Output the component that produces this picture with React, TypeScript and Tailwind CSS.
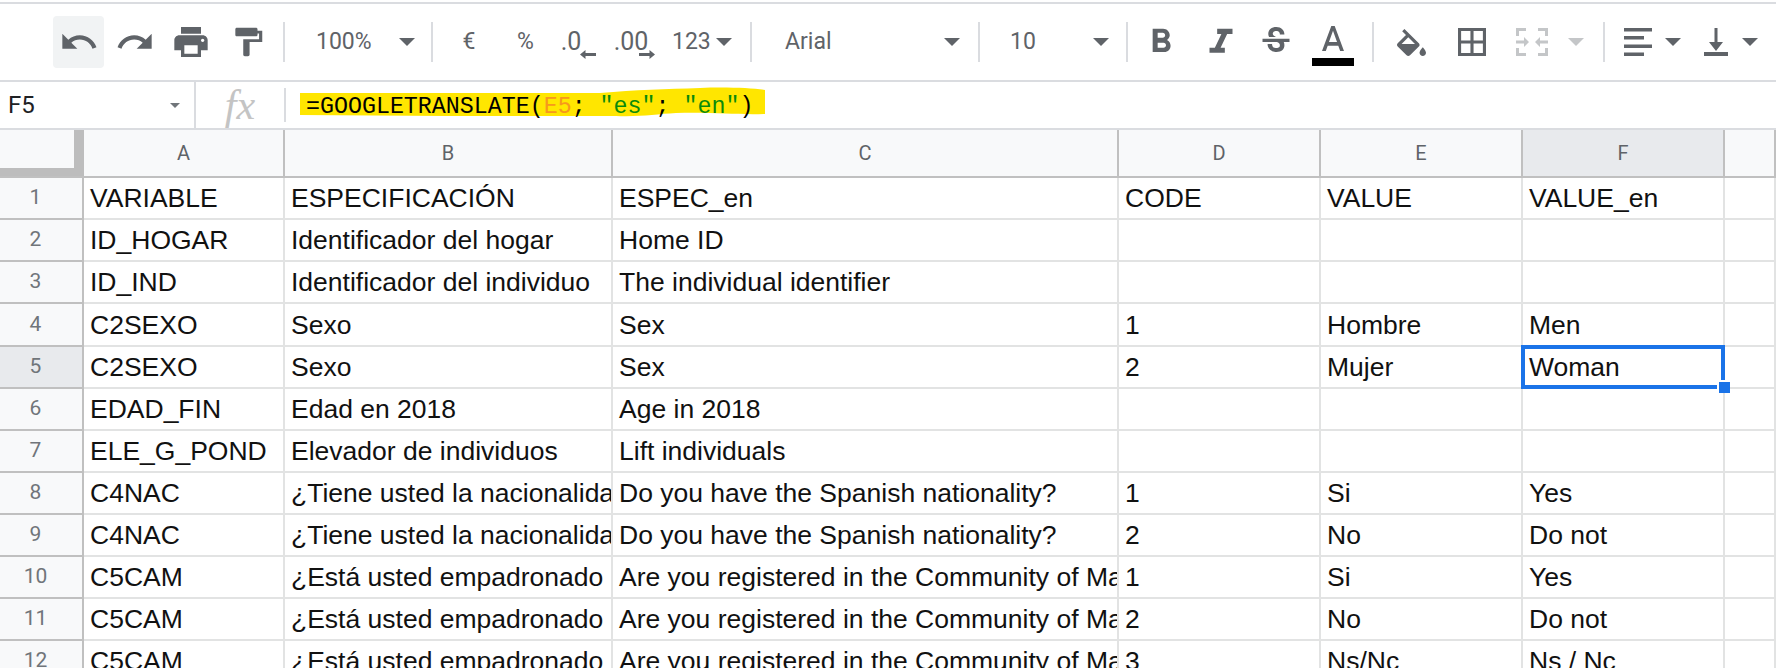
import React from "react";

const rows = [
  ["VARIABLE", "ESPECIFICACIÓN", "ESPEC_en", "CODE", "VALUE", "VALUE_en"],
  ["ID_HOGAR", "Identificador del hogar", "Home ID", "", "", ""],
  ["ID_IND", "Identificador del individuo", "The individual identifier", "", "", ""],
  ["C2SEXO", "Sexo", "Sex", "1", "Hombre", "Men"],
  ["C2SEXO", "Sexo", "Sex", "2", "Mujer", "Woman"],
  ["EDAD_FIN", "Edad en 2018", "Age in 2018", "", "", ""],
  ["ELE_G_POND", "Elevador de individuos", "Lift individuals", "", "", ""],
  ["C4NAC", "¿Tiene usted la nacionalida", "Do you have the Spanish nationality?", "1", "Si", "Yes"],
  ["C4NAC", "¿Tiene usted la nacionalida", "Do you have the Spanish nationality?", "2", "No", "Do not"],
  ["C5CAM", "¿Está usted empadronado", "Are you registered in the Community of Ma", "1", "Si", "Yes"],
  ["C5CAM", "¿Está usted empadronado", "Are you registered in the Community of Ma", "2", "No", "Do not"],
  ["C5CAM", "¿Está usted empadronado", "Are you registered in the Community of Ma", "3", "Ns/Nc", "Ns / Nc"],
];

const columns = ["A", "B", "C", "D", "E", "F", ""];
const gridCols = "grid grid-cols-[84px_201px_328px_506px_202px_202px_202px_51px]";

// material icon, fill only
const Icon = ({ d, w = 40, h = 40, box = "0 0 24 24", className = "text-[#5f6368]" }: { d: string; w?: number; h?: number; box?: string; className?: string }) => (
  <svg width={w} height={h} viewBox={box} preserveAspectRatio="none" fill="currentColor" className={className}>
    <path d={d} />
  </svg>
);

const Caret = ({ className = "text-[#5f6368]" }: { className?: string }) => (
  <svg width="16" height="8" viewBox="0 0 16 8" fill="currentColor" className={className}>
    <path d="M0 0h16L8 8z" />
  </svg>
);

const Sep = () => <div className="h-[40px] w-[2px] shrink-0 bg-[#dadce0]" />;

const Cell = ({ w, children }: { w: string; children: React.ReactNode }) => (
  <div className={`flex items-center justify-center shrink-0 ${w}`}>{children}</div>
);

const ArrowLeft = () => (
  <svg width="16" height="9" viewBox="0 0 16 9" fill="currentColor"><path d="M0 4.500L5.500 0v3H16v3H5.500v3z" /></svg>
);
const ArrowRight = () => (
  <svg width="16" height="9" viewBox="0 0 16 9" fill="currentColor"><path d="M16 4.500L10.500 0v3H0v3h10.500v3z" /></svg>
);

function Toolbar() {
  return (
    <div className="flex h-[76px] items-center border-0 pl-[53px] font-['Roboto',sans-serif] text-[23px] text-[#5f6368]">
      <div className="flex h-[52px] w-[51px] shrink-0 items-center justify-center rounded bg-[#f1f3f4]">
        <Icon d="M12.5 8c-2.65 0-5.05.99-6.9 2.6L2 7v9h9l-3.62-3.62c1.39-1.16 3.16-1.88 5.12-1.88 3.54 0 6.55 2.31 7.6 5.5l2.37-.78C21.08 11.03 17.15 8 12.5 8z" />
      </div>
      <Cell w="w-[62px]">
        <Icon d="M18.4 10.6C16.55 8.99 14.15 8 11.5 8c-4.65 0-8.58 3.03-9.96 7.22L3.9 16c1.05-3.19 4.05-5.5 7.6-5.5 1.95 0 3.73.72 5.12 1.88L13 16h9V7l-3.6 3.6z" />
      </Cell>
      <Cell w="w-[50px]">
        <Icon d="M19 8H5c-1.66 0-3 1.34-3 3v6h4v4h12v-4h4v-6c0-1.66-1.34-3-3-3zm-3 11H8v-5h8v5zm3-7c-.55 0-1-.45-1-1s.45-1 1-1 1 .45 1 1-.45 1-1 1zm-1-9H6v4h12V3z" />
      </Cell>
      <Cell w="w-[64px]">
        <Icon d="M18 4V3c0-.55-.45-1-1-1H5c-.55 0-1 .45-1 1v4c0 .55.45 1 1 1h12c.55 0 1-.45 1-1V6h1v4H9v11c0 .55.45 1 1 1h2c.55 0 1-.45 1-1v-9h8V4h-3z" w={38} h={34} />
      </Cell>
      <div className="ml-[3px]"><Sep /></div>

      <div className="flex w-[146px] shrink-0 items-center pl-[31px]">
        <span className="w-[83px]">100%</span>
        <Caret />
      </div>
      <Sep />

      <Cell w="w-[72px]">€</Cell>
      <Cell w="w-[41px]">%</Cell>
      <div className="relative flex w-[56px] shrink-0 justify-center pr-[6px] text-[25px]">
        .0
        <span className="absolute left-[34px] top-[27px]"><ArrowLeft /></span>
      </div>
      <div className="relative flex w-[60px] shrink-0 justify-center pr-[2px] text-[25px]">
        .00
        <span className="absolute left-[37px] top-[27px]"><ArrowRight /></span>
      </div>
      <div className="flex w-[88px] shrink-0 items-center pl-[10px]">
        <span className="w-[44px]">123</span>
        <Caret />
      </div>
      <Sep />

      <div className="flex w-[226px] shrink-0 items-center pl-[33px]">
        <span className="w-[159px]">Arial</span>
        <Caret />
      </div>
      <Sep />

      <div className="flex w-[146px] shrink-0 items-center pl-[30px]">
        <span className="w-[83px]">10</span>
        <Caret />
      </div>
      <Sep />

      <Cell w="w-[66px]">
        <Icon d="M15.6 10.79c.97-.67 1.65-1.77 1.65-2.79 0-2.26-1.75-4-4-4H7v14h7.04c2.09 0 3.71-1.7 3.71-3.79 0-1.52-.86-2.82-2.15-3.42zM10 6.5h3c.83 0 1.5.67 1.5 1.5s-.67 1.5-1.5 1.5h-3v-3zm3.5 9H10v-3h3.5c.83 0 1.5.67 1.5 1.5s-.67 1.5-1.5 1.5z" />
      </Cell>
      <Cell w="w-[54px]">
        <Icon d="M10 4v3h2.21l-3.42 8H6v3h8v-3h-2.21l3.42-8H18V4z" w={46} h={41} />
      </Cell>
      <Cell w="w-[56px]">
        <Icon d="M7.24 8.75c-.26-.48-.39-1.03-.39-1.67 0-.61.13-1.16.4-1.67.26-.5.63-.93 1.11-1.29.48-.35 1.05-.63 1.7-.83.66-.19 1.39-.29 2.18-.29.81 0 1.54.11 2.21.34.66.22 1.23.54 1.69.94.47.4.83.88 1.08 1.43.25.55.38 1.15.38 1.81h-3.01c0-.31-.05-.59-.15-.85-.09-.27-.24-.49-.44-.68-.2-.19-.45-.33-.75-.44-.3-.1-.66-.16-1.06-.16-.39 0-.74.04-1.03.13-.29.09-.53.21-.72.36-.19.16-.34.34-.44.55-.1.21-.15.43-.15.66 0 .48.25.88.74 1.21.38.25.77.48 1.41.7H7.39c-.05-.08-.11-.17-.15-.25zM21 12v-2H3v2h9.62c.18.07.4.14.55.2.37.17.66.34.87.51.21.17.35.36.43.57.07.2.11.43.11.69 0 .23-.05.45-.14.66-.09.2-.23.38-.42.53-.19.15-.42.26-.71.35-.29.08-.63.13-1.01.13-.43 0-.83-.04-1.18-.13s-.66-.23-.91-.42c-.25-.19-.45-.44-.59-.75-.14-.31-.25-.76-.25-1.21H6.4c0 .55.08 1.13.24 1.58.16.45.37.85.65 1.21.28.35.6.66.98.92.37.26.78.48 1.22.65.44.17.9.3 1.38.39.48.08.96.13 1.44.13.8 0 1.53-.09 2.18-.28s1.21-.45 1.67-.79c.46-.34.82-.77 1.07-1.27s.38-1.07.38-1.71c0-.6-.1-1.14-.31-1.61-.05-.11-.11-.23-.17-.33H21z" w={36} h={40} />
      </Cell>
      <div className="mt-[8px] flex w-[62px] shrink-0 flex-col items-center gap-[7px] pr-[4px]">
        <Icon d="M11 3L5.5 17h2.25l1.12-3h6.25l1.12 3h2.25L13 3h-2zm-1.38 9L12 5.67 14.38 12H9.62z" w={22} h={25} box="5.5 3 13 14" />
        <div className="h-[8px] w-[42px] bg-black" />
      </div>
      <div className="ml-[6px]"><Sep /></div>

      <Cell w="w-[74px]">
        <svg width="29" height="27" viewBox="3 0 18 17" fill="currentColor" preserveAspectRatio="none" className="text-[#5f6368]">
          <path d="M16.56 8.94L7.62 0 6.21 1.41l2.38 2.38-5.15 5.15c-.59.59-.59 1.54 0 2.12l5.5 5.5c.29.29.68.44 1.06.44s.77-.15 1.06-.44l5.5-5.5c.59-.58.59-1.53 0-2.12zM5.21 10L10 5.21 14.79 10H5.21z" />
          <path d="M4.500 9.500h11.500L10 15.500zM19 11.500s-2 2.17-2 3.500c0 1.100.9 2 2 2s2-.9 2-2c0-1.330-2-3.500-2-3.500z" />
        </svg>
      </Cell>
      <Cell w="w-[48px]">
        <Icon d="M3 3v18h18V3H3zm8 16H5v-6h6v6zm0-8H5V5h6v6zm8 8h-6v-6h6v6zm0-8h-6V5h6v6z" w={28} h={28} box="3 3 18 18" />
      </Cell>
      <Cell w="w-[72px]">
        <svg width="32" height="28" viewBox="0 0 32 28" fill="#c4c6c8">
          <path d="M0 0h10v3H3v5H0zM22 0h10v8h-3V3h-7zM0 20h3v5h7v3H0zM29 20h3v8H22v-3h7zM0 12.500h8V9l5 5-5 5v-3.500H0zM32 12.500h-8V9l-5 5 5 5v-3.500h8z" />
        </svg>
      </Cell>
      <div className="flex w-[35px] shrink-0 items-center"><Caret className="text-[#c4c6c8]" /></div>
      <Sep />

      <div className="flex w-[99px] shrink-0 items-center gap-[13px] pl-[19px]">
        <svg width="28" height="28" viewBox="0 0 28 28" fill="currentColor" className="text-[#5f6368]">
          <path d="M0 0h28v3.500H0zM0 8h20v3.500H0zM0 16.500h28v3.500H0zM0 24.500h20v3.500H0z" />
        </svg>
        <Caret />
      </div>
      <div className="flex w-[70px] shrink-0 items-center gap-[14px]">
        <svg width="24" height="28" viewBox="0 0 24 28" fill="currentColor" className="text-[#5f6368]">
          <path d="M10.500 0h3v14H19l-7 9-7-9h5.500zM0 24h24v4H0z" />
        </svg>
        <Caret />
      </div>
    </div>
  );
}

function FormulaBar() {
  return (
    <div className="relative flex h-[46px] items-center border-y-2 border-[#dadce0] box-content">
      <div className="flex h-full w-[196px] shrink-0 items-center justify-between border-r-2 border-[#dadce0] pl-[8px] pr-[14px] font-['Roboto',sans-serif] text-[24px] text-[#202124]">
        <span>F5</span>
        <svg width="10" height="5" viewBox="0 0 10 5" fill="#70757a"><path d="M0 0h10L5 5z" /></svg>
      </div>
      <div className="flex w-[88px] shrink-0 justify-center font-['Liberation_Serif',serif] text-[42px] italic leading-none text-[#c4c4c4]">fx</div>
      <div className="h-[34px] w-[2px] shrink-0 bg-[#dadce0]" />
      <svg width="470" height="46" viewBox="0 0 470 46" className="absolute left-[296px] top-0" fill="#ffe600">
        <path d="M4 11 L120 11 L304 11 C340 8 370 7 404 6 C430 5 455 6 469 8 L469 32 C440 33 420 30 380 31 C360 32 345 35 320 34 L150 34 L4 33 Z" />
      </svg>
      <div className="relative ml-[20px] whitespace-pre pt-[5px] font-['Liberation_Mono',monospace] text-[23.300px] leading-none text-black">
        =GOOGLETRANSLATE(<span className="text-[#f7981d]">E5</span>; <span className="text-[#0b8a0b]">"es"</span>; <span className="text-[#0b8a0b]">"en"</span>)
      </div>
    </div>
  );
}

function ColumnHeader() {
  return (
    <div className={`${gridCols} h-[48px] border-b-2 border-[#c0c0c0] bg-[#f8f9fa] font-['Roboto',sans-serif] text-[20px] text-[#5f6368] box-border`}>
      <div className="border-r-[10px] border-b-[8px] border-[#bdbdbd]" />
      {columns.map((c, i) => (
        <div
          key={i}
          className={`flex items-center justify-center border-r-2 border-[#c0c0c0] ${c === "F" ? "bg-[#e8eaed]" : ""}`}
        >
          {c}
        </div>
      ))}
    </div>
  );
}

function SheetRow({ cells, index }: { cells: string[]; index: number }) {
  const selected = index === 4;
  // the screenshot's row lines are not evenly spaced, row 4 is a pixel taller
  const height = index === 3 ? "h-[43px]" : "h-[42px]";
  return (
    <div className={`${gridCols} ${height} font-['Liberation_Sans',sans-serif] text-[26.500px] text-[#111]`}>
      <div
        className={`flex items-center justify-center border-r-2 border-b-2 border-[#c0c0c0] pr-[11px] font-['Roboto',sans-serif] text-[21px] text-[#70757a] ${selected ? "bg-[#e8eaed]" : "bg-[#f8f9fa]"}`}
      >
        {index + 1}
      </div>
      {cells.map((text, i) => (
        <div
          key={i}
          className="relative flex items-center overflow-hidden whitespace-nowrap border-r-2 border-b-2 border-[#e2e3e3] pl-[6px] pt-[2px]"
        >
          {text}
        </div>
      ))}
      <div className="border-r-2 border-b-2 border-[#e2e3e3]" />
    </div>
  );
}

export default function App() {
  return (
    <div className="relative h-[668px] w-[1776px] overflow-hidden bg-white">
      <div className="mt-[2px] h-[2px] bg-[#dadce0]" />
      <Toolbar />
      <FormulaBar />
      <ColumnHeader />
      <div>
        {rows.map((cells, i) => (
          <SheetRow key={i} cells={cells} index={i} />
        ))}
      </div>
      {/* active cell outline and fill handle */}
      <div className="absolute left-[1521px] top-[345px] h-[44px] w-[204px] border-[4px] border-[#1a73e8]" />
      <div className="absolute left-[1717px] top-[380px] h-[13px] w-[13px] border-l-2 border-t-2 border-white bg-[#1a73e8]" />
    </div>
  );
}
